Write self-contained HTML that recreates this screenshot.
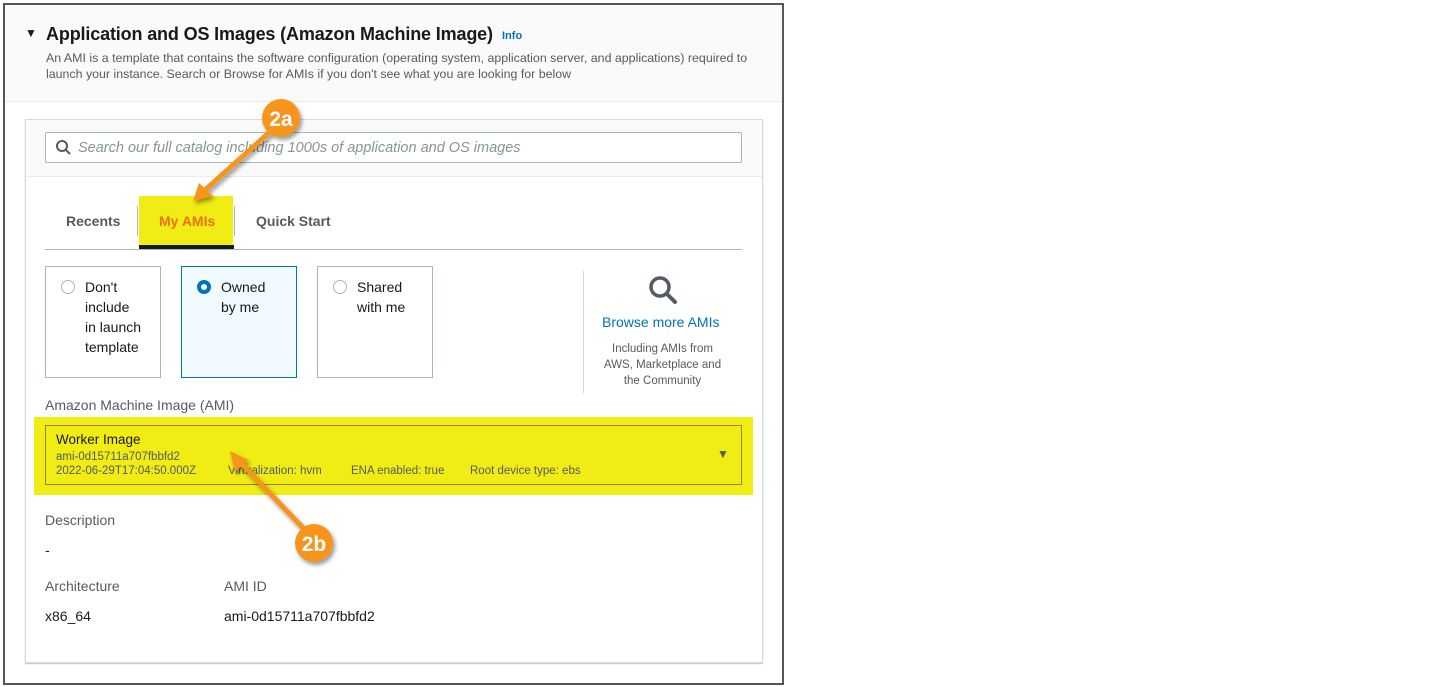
<!DOCTYPE html>
<html><head><meta charset="utf-8"><style>
*{margin:0;padding:0;box-sizing:border-box}
body{width:1442px;height:687px;background:#fff;font-family:"Liberation Sans",sans-serif;position:relative;overflow:hidden;color:#16191f}
.a{position:absolute;white-space:nowrap}
.frame{position:absolute;left:3px;top:3px;width:781px;height:682px;border:2px solid #555}
.hdr{position:absolute;left:5px;top:5px;width:777px;height:97px;background:#fafafa;border-bottom:1px solid #eaeded}
.card{position:absolute;left:25px;top:119px;width:738px;height:544px;border:1px solid #d5dbdb;box-shadow:0 1px 1px rgba(0,0,0,.25)}
.sbar{position:absolute;left:0;top:0;width:736px;height:57px;background:#fafafa;border-bottom:1px solid #eaeded}
.tile{position:absolute;top:266px;width:116px;height:112px;border:1px solid #aab7b8;background:#fff}
.radio{position:absolute;width:14px;height:14px;border:1px solid #aab7b8;border-radius:50%;background:#fff}
.t13{font-size:14px;line-height:20px;color:#16191f}
</style></head><body>
<div class="frame"></div>
<div class="hdr"></div>
<div class="a" style="left:25px;top:26px;font-size:12px">▼</div>
<div class="a" style="left:46px;top:24px;font-size:18px;font-weight:bold;letter-spacing:-0.15px">Application and OS Images (Amazon Machine Image)</div>
<div class="a" style="left:502px;top:30px;font-size:11px;font-weight:bold;color:#0073bb">Info</div>
<div class="a" style="left:46px;top:50px;font-size:12.4px;line-height:16px;color:#545b64">An AMI is a template that contains the software configuration (operating system, application server, and applications) required to<br>launch your instance. Search or Browse for AMIs if you don't see what you are looking for below</div>
<div class="card"><div class="sbar"></div></div>
<div class="a" style="left:45px;top:132px;width:697px;height:31px;border:1px solid #aab7b8;border-radius:2px;background:#fff"></div>
<svg class="a" style="left:55px;top:139px" width="18" height="18" viewBox="0 0 18 18"><circle cx="7" cy="7" r="5" fill="none" stroke="#545b64" stroke-width="2"/><path d="M11 11l4 4" stroke="#545b64" stroke-width="2"/></svg>
<div class="a" style="left:78px;top:140px;font-size:14.5px;font-style:italic;color:#879596">Search our full catalog including 1000s of application and OS images</div>
<div class="a" style="left:139px;top:196px;width:94px;height:49px;background:#f0ec14"></div>
<div class="a" style="left:137px;top:206px;width:1px;height:30px;background:#aab7b8"></div>
<div class="a" style="left:234px;top:206px;width:1px;height:30px;background:#aab7b8"></div>
<div class="a" style="left:66px;top:213px;font-size:14px;font-weight:bold;color:#545b64">Recents</div>
<div class="a" style="left:159px;top:213px;font-size:14px;font-weight:bold;color:#ec7211">My AMIs</div>
<div class="a" style="left:256px;top:213px;font-size:14px;font-weight:bold;color:#545b64">Quick Start</div>
<div class="a" style="left:45px;top:249px;width:697px;height:1px;background:#aab7b8"></div>
<div class="a" style="left:139px;top:245px;width:95px;height:4px;background:#16191f"></div>
<div class="tile" style="left:45px"></div>
<div class="tile" style="left:181px;border-color:#0073bb;background:#f1faff"></div>
<div class="tile" style="left:317px"></div>
<div class="radio" style="left:61px;top:280px"></div>
<div class="radio" style="left:197px;top:280px;border:4px solid #0073bb"></div>
<div class="radio" style="left:333px;top:280px"></div>
<div class="a t13" style="left:85px;top:277px">Don't<br>include<br>in launch<br>template</div>
<div class="a t13" style="left:221px;top:277px">Owned<br>by me</div>
<div class="a t13" style="left:357px;top:277px">Shared<br>with me</div>
<div class="a" style="left:583px;top:271px;width:1px;height:122px;background:#d5dbdb"></div>
<svg class="a" style="left:647px;top:274px" width="32" height="32" viewBox="0 0 32 32"><circle cx="13" cy="13" r="9" fill="none" stroke="#545b64" stroke-width="3.5"/><path d="M20 20l8 8" stroke="#545b64" stroke-width="4" stroke-linecap="round"/></svg>
<div class="a" style="left:602px;top:314px;font-size:14px;color:#0073bb">Browse more AMIs</div>
<div class="a" style="left:595px;top:341px;width:135px;text-align:center;font-size:11.5px;line-height:16px;color:#545b64;white-space:normal">Including AMIs from<br>AWS, Marketplace and<br>the Community</div>
<div class="a" style="left:45px;top:397px;font-size:14px;color:#545b64">Amazon Machine Image (AMI)</div>
<div class="a" style="left:34px;top:417px;width:719px;height:78px;background:#f0ec14"></div>
<div class="a" style="left:45px;top:425px;width:697px;height:60px;border:1px solid #8b8a2a"></div>
<div class="a" style="left:56px;top:432px;font-size:13.5px">Worker Image</div>
<div class="a" style="left:56px;top:451px;font-size:11.5px;color:#545b64">ami-0d15711a707fbbfd2</div>
<div class="a" style="left:56px;top:465px;font-size:11.5px;color:#545b64">2022-06-29T17:04:50.000Z</div>
<div class="a" style="left:228px;top:465px;font-size:11.5px;color:#545b64">Virtualization: hvm</div>
<div class="a" style="left:351px;top:465px;font-size:11.5px;color:#545b64">ENA enabled: true</div>
<div class="a" style="left:470px;top:465px;font-size:11.5px;color:#545b64">Root device type: ebs</div>
<div class="a" style="left:717px;top:447px;font-size:12px;color:#545b64">▼</div>
<div class="a" style="left:45px;top:512px;font-size:14px;color:#545b64">Description</div>
<div class="a" style="left:45px;top:542px;font-size:14px">-</div>
<div class="a" style="left:45px;top:578px;font-size:14px;color:#545b64">Architecture</div>
<div class="a" style="left:224px;top:578px;font-size:14px;color:#545b64">AMI ID</div>
<div class="a" style="left:45px;top:608px;font-size:14px">x86_64</div>
<div class="a" style="left:224px;top:608px;font-size:14px">ami-0d15711a707fbbfd2</div>
<svg class="a" style="left:0;top:0" width="790" height="687" viewBox="0 0 790 687">
<defs><filter id="s" x="-50%" y="-50%" width="200%" height="200%"><feDropShadow dx="2" dy="3" stdDeviation="2" flood-opacity="0.4"/></filter></defs>
<g filter="url(#s)">
<path d="M272 130 L205 190" stroke="#f7941d" stroke-width="5" fill="none"/>
<path d="M193 201 L199 183 L213 196 Z" fill="#f7941d"/>
<circle cx="281" cy="118" r="19" fill="#f7941d"/>
<path d="M305 530 L240 462" stroke="#f7941d" stroke-width="5" fill="none"/>
<path d="M230 451 L248 460 L235 472 Z" fill="#f7941d"/>
<circle cx="314" cy="543" r="19" fill="#f7941d"/>
</g>
<text x="281" y="126" font-family="Liberation Sans" font-weight="bold" font-size="21" fill="#fff" text-anchor="middle">2a</text>
<text x="314" y="551" font-family="Liberation Sans" font-weight="bold" font-size="21" fill="#fff" text-anchor="middle">2b</text>
</svg>
</body></html>
